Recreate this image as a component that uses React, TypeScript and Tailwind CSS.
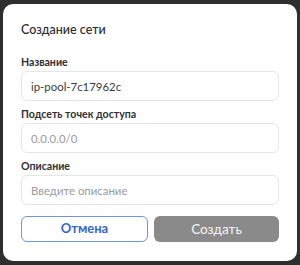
import React from 'react';

function Field({ label, value, placeholder }: { label: string; value?: string; placeholder?: string }) {
  return (
    <div className="flex flex-col">
      <label className="text-[10.6px] leading-[16px] font-bold text-[#2f2f33] mb-[1px]">{label}</label>
      <input
        readOnly
        defaultValue={value}
        placeholder={placeholder}
        className="h-[30px] w-full rounded-[6px] border border-[#e6e6e8] bg-white px-[9px] text-[11.4px] text-[#3a3a3e] placeholder:text-[#9a9aa0] outline-none"
      />
    </div>
  );
}

export default function App() {
  return (
    <div className="w-[300px] h-[265px] bg-[#2e2e2f] flex items-start justify-center pt-[4px] font-['Lato',sans-serif]">
      <div className="w-[294px] h-[257px] bg-white rounded-[10px] px-[18px] pt-[16px]">
        <h2 className="text-[12.5px] leading-[20px] font-medium text-[#2a2a2e]">Создание сети</h2>
        <div className="mt-[14px] flex flex-col gap-[5px]">
          <Field label="Название" value="ip-pool-7c17962c" />
          <Field label="Подсеть точек доступа" placeholder="0.0.0.0/0" />
          <Field label="Описание" placeholder="Введите описание" />
        </div>
        <div className="mt-[11px] flex gap-[6px]">
          <button className="flex-1 h-[26px] rounded-[6px] border border-[#6f95e0] bg-white text-[13px] font-bold text-[#3565cf]">
            Отмена
          </button>
          <button className="flex-1 h-[26px] rounded-[6px] bg-[#8a8a8a] text-[13.5px] font-medium text-[#f0f0f0]">
            Создать
          </button>
        </div>
      </div>
    </div>
  );
}
